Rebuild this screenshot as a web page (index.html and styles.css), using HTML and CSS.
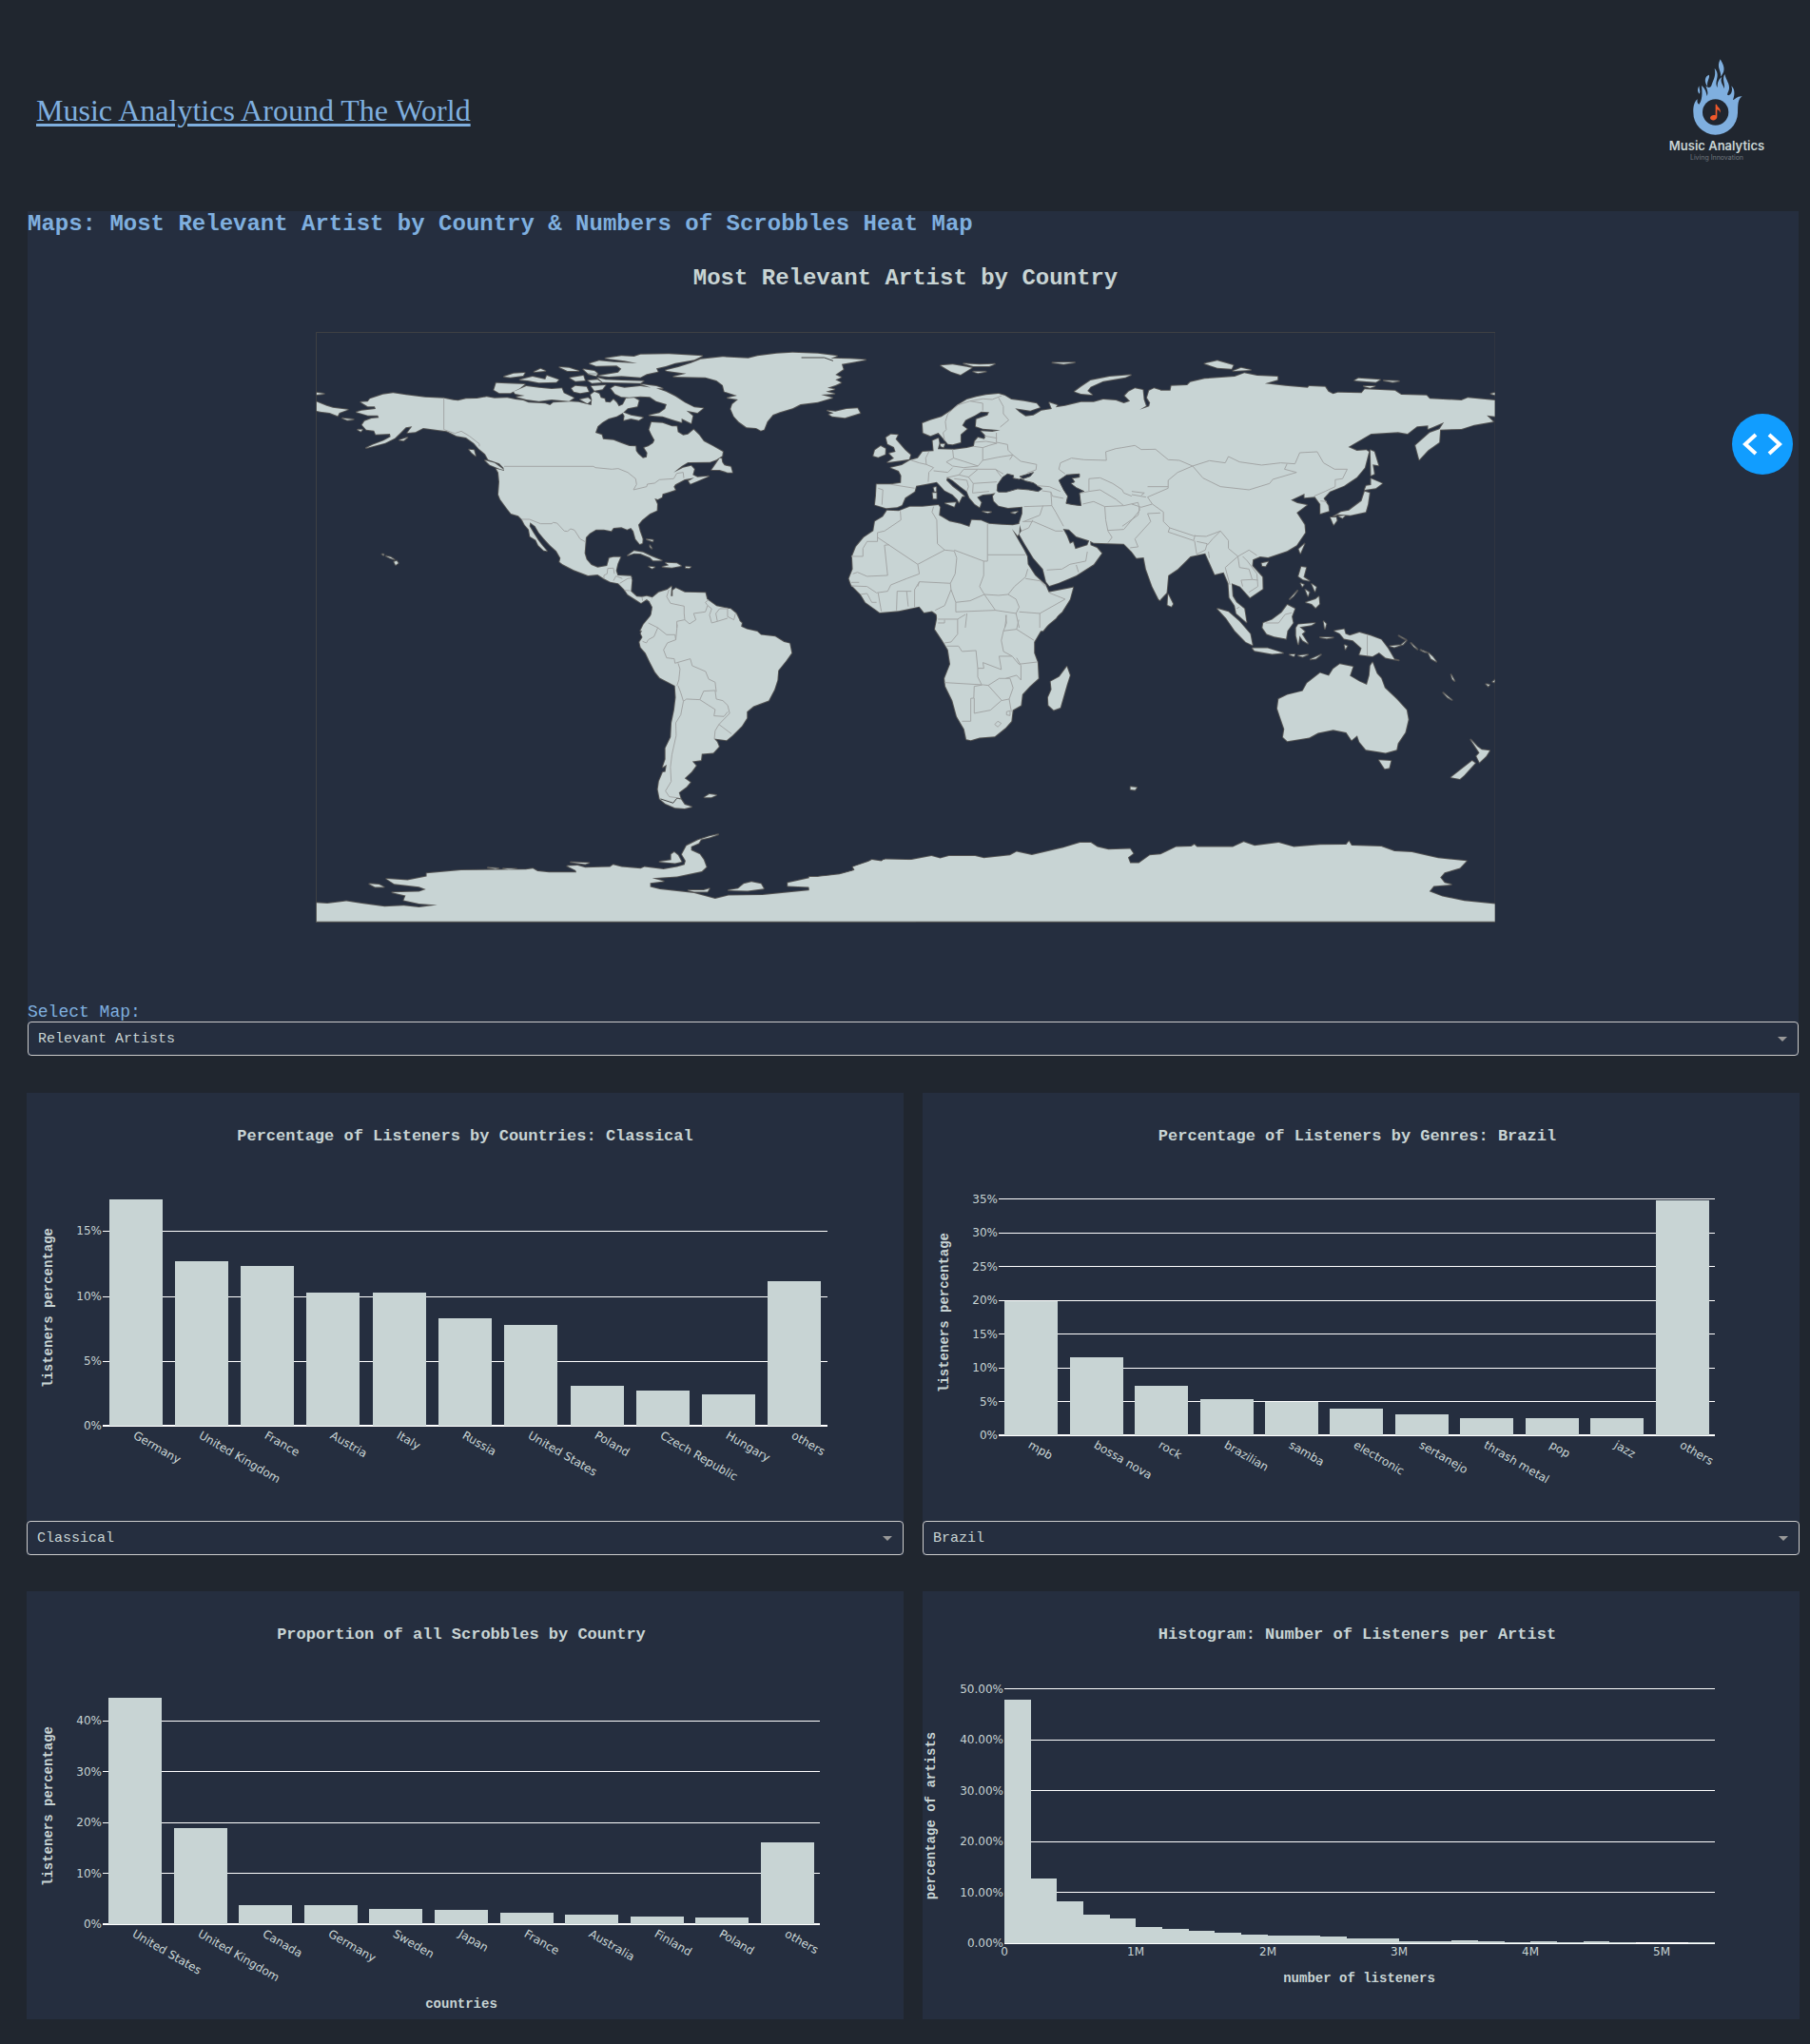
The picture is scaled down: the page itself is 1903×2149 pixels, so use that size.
FILE: index.html
```html
<!DOCTYPE html>
<html lang="en">
<head>
<meta charset="utf-8">
<title>Music Analytics Around The World</title>
<meta name="viewport" content="width=device-width, initial-scale=1">
<link rel="stylesheet" href="styles.css">
</head>
<body>
<header class="header">
  <h1 class="header-title">Music Analytics Around The World</h1>
  <div class="logo">
    <svg class="logo-mark" viewBox="236 92 160 240" aria-hidden="true">
      <path class="flame" d="M243 260C242 240 248 224 256 219C254 228 257 234 261 235C271 223 272 200 269 176C281 186 284 198 286 209C291 200 287 190 282 177C290 184 297 183 300 176C304 160 316 148 310 121C323 135 319 150 316 161C314 172 316 178 319 182C318 166 324 154 333 149C326 165 337 173 341 186C343 168 333 155 342 140C347 160 358 170 356 185C355 195 349 200 351 206C361 209 369 194 363 177C375 188 374 205 368 221C375 222 378 209 397 210C383 219 384 235 383 262A70 70 0 0 1 243 260ZM328 93C338 110 348 128 329 148C333 130 314 120 328 93ZM293 142C278 146 277 165 288 179C284 164 295 154 293 142ZM261 177C255 188 256 196 262 202C266 195 262 188 261 177Z"/>
      <circle class="disc" cx="313" cy="260" r="41"/>
      <path class="note" d="M313 235H317C319 247 331 245 328 262C326 254 321 252 318 252V276C317 287 297 289 296 278C297 269 307 267 313 270Z"/>
    </svg>
    <strong class="logo-name">Music Analytics</strong>
    <span class="logo-tag">Living Innovation</span>
  </div>
</header>

<main class="page">
  <section class="panel map-panel">
    <h2 class="section-title">Maps: Most Relevant Artist by Country &amp; Numbers of Scrobbles Heat Map</h2>
    <div class="map-area">
    <h3 class="map-title">Most Relevant Artist by Country</h3>
    <svg class="map" viewBox="36 27 3722 1862" role="img" aria-label="World map">
      <defs>
        <g id="land">
          <!-- North America and Greenland -->
          <path d="M178 248L200 247L207 238L230 230L248 224L280 220L320 226L380 233L440 236L470 242L485 244L510 238L545 237L575 232L600 236L640 235L665 240L690 243L707 250L760 253L775 258L785 250L840 247L865 248L905 258L907 240L903 225L915 216L930 222L935 235L947 238L950 248L965 250L975 240L985 250L992 262L1005 256L1015 236L1040 235L1055 243L1050 262L1020 268L1005 282L985 293L960 300L940 312L925 325L918 345L938 352L942 365L975 368L1000 378L1025 387L1045 388L1046 402L1053 412L1068 425L1080 422L1082 408L1072 392L1085 388L1100 378L1105 368L1095 350L1088 335L1095 312L1130 314L1160 325L1175 325L1178 343L1195 353L1210 350L1228 335L1245 352L1260 372L1290 388L1320 405L1318 418L1300 430L1280 437L1210 438L1190 450L1165 470L1195 455L1220 449L1230 460L1225 478L1240 485L1275 482L1240 497L1218 506L1212 497L1230 487L1200 492L1170 508L1165 515L1170 525L1150 532L1130 538L1128 548L1115 555L1105 552L1113 570L1112 590L1090 600L1065 620L1053 635L1058 655L1067 680L1066 693L1058 696L1045 680L1038 655L1030 645L1018 650L1000 643L975 645L968 655L945 650L920 650L900 662L888 675L886 700L884 725L890 745L905 762L925 770L955 765L962 740L975 737L997 737L988 758L983 780L988 795L1030 797L1033 810L1030 845L1048 862L1065 863L1080 860L1098 865L1092 880L1080 870L1062 882L1040 868L1020 855L1010 840L990 820L965 815L945 805L925 792L895 795L850 778L815 760L805 752L808 740L795 718L775 700L755 678L740 660L728 640L712 628L710 640L722 660L738 685L752 703L765 718L755 716L738 700L730 683L712 672L708 650L695 635L686 618L675 607L652 600L640 585L618 555L612 540L615 500L612 470L605 458L630 465L628 455L615 442L580 430L570 412L550 395L535 378L510 360L480 355L450 340L420 336L375 330L350 343L325 345L340 325L320 328L303 345L285 362L255 377L195 393L215 383L250 370L272 358L270 348L225 350L220 338L195 335L182 320L190 308L212 300L235 298L232 290L200 290L165 280L180 275L225 270L222 262L200 262Z"/>
          <path d="M570 432L600 440L630 462L618 460L585 446ZM1310 425L1300 440L1285 462L1310 462L1335 470L1350 470L1345 452L1325 448L1318 438L1316 426ZM605 188L640 190L695 192L680 205L650 220L615 220L598 210ZM660 215L700 198L740 203L780 207L812 205L818 220L850 235L835 245L780 240L740 245L700 240L670 232L695 228L665 222ZM843 205L855 197L890 200L897 215L870 220L850 215ZM905 198L950 195L940 208L915 212ZM870 240L895 235L905 243L893 253Z"/>
          <path d="M967 205L980 197L1010 203L1060 198L1110 205L1140 215L1170 230L1200 250L1230 265L1258 268L1240 282L1205 275L1225 292L1220 315L1190 300L1190 312L1160 303L1130 293L1088 290L1120 283L1138 270L1143 255L1110 245L1090 232L1060 230L1025 233L1000 232L980 222ZM1003 280L1030 290L1068 297L1055 305L1030 300L1008 305L1010 292ZM925 172L950 178L1000 180L1070 182L1060 188L1000 187L940 185ZM1062 192L1110 198L1130 205L1100 205Z"/>
          <path d="M950 110L1000 103L1040 105L1060 98L1150 97L1255 103L1230 115L1170 125L1140 135L1110 142L1115 152L1080 160L1060 170L1000 166L960 168L930 165L990 155L1000 143L985 133L920 134L900 127L930 118L975 122L1050 126L1010 118ZM680 178L720 168L760 177L765 165L802 178L795 185L740 187L705 180ZM630 168L660 158L695 156L690 165L650 170ZM725 153L745 143L760 150ZM805 138L835 140L865 150L830 150ZM838 172L880 165L885 180L855 182ZM880 145L915 150L925 158L895 158ZM895 180L925 178L937 186L907 188ZM895 160L925 160L920 166Z"/>
          <path d="M37 218L62 222L37 225ZM37 247L70 260L90 266L137 272L110 282L105 292L80 282L50 278L37 275ZM120 299L155 303L135 305ZM168 335L183 335L178 341ZM300 368L325 360L313 370ZM520 398L535 400L540 418L528 408ZM283 752L291 749L296 756L288 762ZM258 734L272 737L284 745L270 740ZM245 728L250 728L250 731ZM1020 732L1040 718L1068 722L1095 735L1127 748L1100 748L1090 738L1060 726L1040 725ZM1140 755L1175 757L1188 765L1160 770L1130 768L1150 763ZM1087 767L1105 769L1097 773ZM1203 767L1219 768L1214 772L1203 771ZM1080 681L1100 683L1099 688ZM1090 700L1096 710L1091 706Z"/>
          <path d="M1140 148L1180 138L1220 125L1250 113L1320 106L1400 110L1430 103L1490 95L1540 92L1620 95L1680 103L1660 110L1720 112L1770 115L1730 122L1695 128L1700 145L1675 162L1693 170L1675 178L1693 187L1675 195L1650 203L1672 208L1645 215L1672 222L1630 225L1665 235L1620 248L1565 255L1540 268L1500 280L1478 288L1460 310L1450 335L1440 338L1425 330L1395 328L1370 310L1355 293L1345 270L1350 255L1368 240L1335 235L1365 228L1325 215L1320 195L1300 180L1265 170L1165 168L1205 158L1145 150Z"/>
          <!-- South America -->
          <path d="M1098 865L1118 848L1145 840L1158 830L1156 860L1162 860L1162 842L1172 835L1200 848L1265 850L1270 870L1300 892L1340 900L1360 915L1368 935L1380 945L1375 970L1060 970L1070 950L1095 920L1098 895L1090 880Z"/>
          <g transform="matrix(1.2054 0 0 1 0 900)">
            <path d="M912 0L905 30L888 60L880 78L885 90L877 105L880 122L893 140L905 170L918 200L930 218L970 243L972 280L968 320L961 360L959 405L945 440L945 475L938 500L948 492L945 515L938 516L928 545L925 570L930 600L945 615L970 628L995 630L1013 625L995 618L985 600L980 580L1000 562L1010 548L995 535L1013 515L1025 495L1015 482L1038 478L1040 458L1070 455L1085 435L1080 420L1072 410L1105 415L1120 400L1145 370L1158 345L1158 325L1175 308L1215 290L1230 255L1238 225L1240 195L1260 165L1275 140L1270 110L1255 105L1232 88L1195 83L1185 72L1158 65L1140 55L1138 35L1130 15L1115 0ZM1047 595L1060 585L1078 588L1065 595Z"/>
            <path d="M30 928L60 930L110 923L150 930L210 940L260 937L300 942L348 935L300 930L260 920L265 905L230 895L300 893L318 885L300 877L235 868L215 852L270 857L320 845L320 835L410 825L580 823L598 820L610 828L640 832L712 832L710 825L688 812L715 810L735 817L800 815L808 808L830 815L880 820L890 815L940 822L975 815L995 808L998 795L988 775L1000 748L1030 730L1060 718L1083 712L1060 722L1038 728L1032 740L1012 750L1012 762L1035 775L1045 792L1052 815L1040 828L975 845L910 850L940 860L905 865L905 878L930 885L1020 897L1075 915L1110 905L1200 903L1325 888L1320 878L1265 875L1265 865L1330 848L1400 840L1440 825L1437 815L1475 800L1485 792L1510 797L1520 791L1600 793L1600 988L30 988Z"/>
            <path d="M930 798L960 793L960 775L968 768L978 778L987 798L970 803ZM1110 888L1135 883L1150 868L1170 862L1195 868L1202 883L1160 890ZM170 868L195 870L208 878L185 878ZM697 800L745 802L735 806ZM1005 888L1045 888L1060 883L1055 893L1020 893ZM480 817L508 819L500 821ZM520 820L555 821L535 823Z"/>
          </g>
          <!-- Europe, western Asia and northern Africa -->
          <g transform="translate(1500 0)">
            <path d="M1200 211L1180 205L1165 212L1158 235L1168 250L1165 262L1135 272L1155 260L1148 240L1145 210L1120 205L1100 215L1088 228L1105 245L1085 252L1060 243L1020 240L990 248L950 248L900 260L870 265L875 258L850 250L858 270L825 275L800 290L775 293L755 280L742 268L790 275L820 265L810 253L770 245L730 240L710 228L690 222L650 226L620 232L590 240L565 255L540 275L510 295L475 305L450 315L452 345L475 355L500 345L515 362L530 380L545 382L570 375L570 350L590 333L575 322L585 305L615 290L635 278L660 280L655 290L620 302L618 325L640 332L695 337L670 342L635 340L650 355L645 365L625 360L615 372L612 388L590 393L550 398L498 397L503 378L500 362L482 370L485 403L450 405L435 425L410 432L385 447L350 455L375 465L383 480L382 503L350 508L305 508L303 545L300 572L335 583L370 580L385 573L395 550L425 530L430 512L455 508L495 500L520 527L545 540L560 555L565 565L575 545L582 545L565 530L545 515L525 495L528 485L545 495L570 515L590 530L598 550L615 570L630 580L635 565L622 548L640 540L665 538L680 535L672 545L675 560L690 575L720 582L765 578L765 600L755 630L762 655L755 665L775 700L800 740L830 775L840 815L850 828L880 818L935 795L990 760L1015 725L1000 708L980 700L978 680L970 700L932 712L925 690L915 695L905 670L893 648L912 650L935 672L975 685L990 692L1085 695L1110 720L1125 740L1148 738L1155 775L1175 830L1195 870L1200 872Z"/>
            <path d="M335 360L350 350L372 352L365 365L378 380L395 400L412 415L408 428L380 433L340 438L360 425L345 410L365 405L360 390L340 380ZM295 418L300 400L318 387L333 395L332 413L310 422ZM150 275L175 278L210 270L245 268L253 283L205 298L165 293L155 287L170 283ZM508 133L545 130L605 140L570 162L540 152ZM580 127L630 130L678 128L660 135L610 135ZM610 152L650 152L625 157ZM860 124L930 123L895 128ZM930 215L950 200L980 180L1040 168L1107 163L1090 170L1020 182L980 200L970 213L985 225L950 222ZM482 535L494 535L494 553L484 553ZM485 518L493 516L493 530L488 530ZM522 567L555 565L550 578ZM640 593L666 595L656 598ZM730 597L750 593L742 599ZM506 380L520 380L516 391L508 388Z"/>
            <path d="M338 590L375 592L410 578L450 578L500 573L505 580L502 605L535 625L570 632L598 642L605 620L635 622L660 632L700 635L735 637L757 632L755 662L750 670L732 648L750 680L770 715L780 735L782 760L805 795L838 825L848 848L925 833L915 870L890 910L850 945L830 970L495 970L497 920L480 908L455 912L440 893L375 907L315 912L270 880L255 855L225 825L218 805L230 775L228 735L240 705L265 675L295 655L300 625L325 610Z"/>
          </g>
          <!-- Eastern Asia -->
          <g transform="translate(2580 0)">
            <path d="M110 855L118 873L140 850L145 795L175 775L215 735L262 725L280 765L292 792L320 785L335 820L338 865L355 890L360 915L392 943L385 900L360 880L348 860L345 820L372 830L403 865L443 838L442 800L410 765L412 745L435 735L460 738L520 718L550 700L577 660L575 635L550 597L582 573L552 567L532 557L575 537L575 550L608 547L625 570L625 600L652 592L650 575L635 552L655 530L700 512L740 485L765 455L778 405L770 400L740 402L713 390L785 348L870 343L900 348L930 325L965 322L965 333L1015 312L1000 335L1070 333L1110 320L1170 310L1150 290L1176 293L1176 243L1090 235L1070 243L970 238L960 227L880 225L860 212L765 208L755 220L680 218L665 223L650 215L640 200L590 198L585 203L515 197L450 190L490 178L490 168L425 165L385 157L355 168L260 175L215 185L205 195L155 197L152 212L110 212Z"/>
            <path d="M1003 333L1000 375L965 400L937 430L925 385L970 345ZM783 400L795 405L808 448L790 445L795 475L785 480ZM785 490L820 505L800 520L765 525L770 512L785 510ZM765 530L780 535L775 570L768 595L720 605L680 602L665 610L690 595L715 590L735 575L755 560ZM657 612L675 612L677 622L667 635ZM683 608L703 606L695 614ZM575 695L562 725L557 712ZM440 757L460 752L452 766L442 765ZM145 855L160 885L155 893L143 888ZM260 127L300 118L350 132L345 143L300 140ZM350 150L375 140L405 147ZM733 180L745 173L813 178L800 185ZM825 180L873 182L853 185ZM762 198L797 198L782 203ZM1163 222L1176 219L1176 226ZM565 768L580 770L572 800L590 812L570 808L556 798ZM580 880L610 870L620 862L622 885L610 897L598 885ZM578 840L590 848L586 860ZM598 822L612 832L608 845ZM563 820L573 824L568 830ZM528 870L553 843L540 860Z"/>
          </g>
          <!-- Southern Africa, Indonesia, Australia and eastern Antarctica -->
          <g transform="matrix(1.3776 0 0 1 1620 600)">
            <path d="M270 300L273 330L268 365L285 400L298 430L303 475L290 520L292 545L308 590L318 640L335 680L340 712L350 715L370 707L405 703L430 675L443 655L446 620L465 605L468 570L485 545L505 520L503 470L495 440L495 405L510 370L545 330L560 300ZM570 483L577 510L570 540L555 612L540 620L528 605L527 580L535 555L533 530L553 515Z"/>
            <path d="M915 300L940 310L965 340L990 380L995 415L980 405L955 370L935 330ZM995 425L1030 425L1065 440L1040 443L1000 433ZM1020 345L1040 335L1062 312L1075 288L1092 300L1085 325L1088 345L1075 370L1072 395L1045 388L1028 380L1018 360ZM1095 360L1100 350L1138 345L1130 352L1103 358L1115 372L1108 380L1122 410L1110 400L1103 385L1100 412L1095 385ZM1158 340L1164 348L1161 363ZM1080 445L1092 444L1090 450ZM1100 448L1122 445L1110 452ZM1128 460L1152 445L1140 458ZM1150 390L1180 391L1165 394ZM1183 370L1205 365L1208 380L1218 385L1240 375L1265 385L1290 398L1305 425L1320 460L1330 463L1300 455L1285 438L1270 450L1240 445L1245 425L1225 400L1205 395L1195 378ZM1310 418L1335 415L1348 400L1340 413L1320 422ZM1330 385L1347 398L1338 392ZM1206 415L1212 418L1208 428Z"/>
            <path d="M1358 408L1373 428L1365 420ZM1380 430L1395 438L1388 436ZM1398 440L1408 452L1416 467L1404 458ZM1450 508L1458 528L1453 522ZM1432 565L1452 588L1442 580ZM1530 538L1538 540L1535 545ZM1545 531L1551 524L1549 532ZM716 862L730 864L726 872L716 870Z"/>
            <path d="M1270 470L1280 505L1290 520L1298 550L1325 585L1348 620L1352 650L1345 690L1328 725L1325 745L1300 755L1280 750L1255 745L1240 720L1235 700L1222 715L1210 690L1180 682L1145 692L1125 707L1075 718L1065 705L1068 680L1058 640L1052 615L1055 585L1075 572L1110 560L1120 535L1150 503L1170 512L1180 490L1195 475L1225 483L1218 512L1240 530L1257 540L1263 510L1265 480ZM1285 778L1312 780L1308 803L1298 805ZM1495 713L1510 735L1520 745L1538 748L1530 765L1515 785L1508 765L1515 755ZM1498 780L1505 787L1480 825L1470 837L1450 832L1475 805Z"/>
            <path d="M-20 1146L0 1146L50 1138L85 1125L80 1115L120 1096L145 1098L150 1092L160 1096L200 1096L260 1080L280 1088L300 1080L360 1080L380 1087L440 1078L455 1067L490 1077L560 1055L600 1038L625 1038L640 1052L665 1060L715 1058L722 1072L710 1085L715 1103L735 1103L760 1078L785 1075L820 1052L855 1050L862 1044L868 1052L950 1052L975 1036L1000 1048L1055 1038L1090 1052L1150 1045L1210 1044L1216 1034L1222 1047L1290 1050L1320 1065L1360 1068L1420 1087L1485 1096L1470 1118L1435 1132L1425 1148L1435 1165L1450 1170L1410 1175L1400 1192L1430 1208L1480 1222L1551 1232L1551 1288L-20 1288Z"/>
          </g>
        </g>
      </defs>
      <use class="coast" href="#land"/>
      <use class="ground" href="#land"/>
      <g class="sea">
        <path transform="translate(1500 0)" d="M685 528L687 508L703 485L718 475L738 480L735 488L755 492L760 490L775 497L800 503L827 522L815 530L785 525L750 522L715 532L690 532ZM757 483L800 470L790 482L768 490ZM880 495L905 478L945 475L945 485L922 488L930 500L918 505L935 518L960 530L945 535L950 575L925 572L903 568L908 545L895 525Z"/>
      </g>
      <g class="inlet">
        <path d="M1568 108L1640 108L1668 118"/>
        <path transform="matrix(1.2054 0 0 1 0 900)" d="M932 600L965 613L975 598L985 600"/>
      </g>
      <g class="border">
        <path d="M440 236V335L475 347L495 340L520 355L552 380L552 388M630 451H912L918 455L970 460L990 458L1020 470L1045 490L1048 508L1038 525L1080 515L1082 507L1105 504L1120 493L1165 490L1175 473L1195 470L1197 488M686 618L710 618L745 632L780 632L785 628L797 630L820 655L830 656L840 648L852 652L870 680L888 690M945 805L945 795L955 790L957 773L975 772L978 790M975 812L983 797L1003 805M995 820L1020 805L1033 803M1010 842L1028 843M1065 863L1067 875M1150 840L1143 862L1155 883L1198 892L1198 915L1200 935L1215 948L1235 935L1228 915L1265 910L1272 890L1265 880L1275 872M1272 890L1285 900L1278 920L1285 945L1303 940L1298 915L1310 900L1335 900L1335 925L1355 935L1360 915M1303 940L1335 930M1175 960V940L1200 935"/>
        <path transform="matrix(1.2054 0 0 1 0 900)" d="M900 45L925 60L948 82L970 82L972 98L950 108L940 130L948 155L968 158L970 172L1010 158L1015 180L1050 198L1058 222L1075 232L1078 262M925 60L915 88L900 98L895 108L885 103M978 172L983 190L980 225L975 243M972 98L976 50M978 243L985 265L992 292L1000 285L1035 287L1045 260L1075 258L1078 285L1095 290L1108 305L1113 330L1085 365L1118 395M1035 287L1075 318L1072 338L1098 340L1108 325M1085 365L1075 385L1073 410M992 292L985 335L972 360L973 400L962 460L958 500L960 545L945 575L955 593L980 597"/>
        <path transform="translate(1500 0)" d="M520 370L515 345L525 335L522 310L530 285L560 258L600 245L640 252L640 275M600 245L640 238L670 240L700 228M690 235L705 262L705 285L722 305L695 327M645 355L685 362M683 345V375L718 382L720 400L735 415L725 430M615 375L650 372L685 378M612 388L640 392L640 432L690 422L735 415L760 435L810 445L808 462L780 472M640 392L660 385L685 378M545 398L548 425L580 435L625 450L640 432M548 425L525 437L545 450L580 455L625 450M470 405L460 425L462 445L485 455L470 470L468 500M415 432L440 440L462 445M485 465L530 470L545 455M525 487L565 478L580 460M580 460L625 460L680 460L700 485M680 460L705 475M625 460L595 485L610 505L685 500M565 478L595 485M550 490L590 495L595 515L590 530M610 505L608 535L660 530M310 520L325 525L322 572M350 508L425 520"/>
        <path transform="translate(1500 0)" d="M812 512L850 515L885 530M827 528L855 532L860 545L895 552M855 532L858 575L770 578M858 575L870 595L895 640M830 575L820 605L770 625M765 625L800 625L870 655L893 655M762 655L785 645L798 620M842 778L890 775L915 760L965 750L970 720M935 762L942 785M955 570L990 562L1025 578L1028 620L1035 655L1048 675L1035 692M1035 653L1085 650L1110 620L1135 590L1130 565L1085 575L1025 578M950 535L975 530L1010 525L1060 555L1085 575M975 530V490L1010 487L1050 505L1080 525L1085 535L1110 545M900 475L880 460L885 440L920 425L960 430L1030 432L1028 405L1060 395L1080 392"/>
        <path transform="translate(1500 0)" d="M380 592L382 620L330 655L308 660L308 688H275L262 710L262 735H225M308 675L435 760L520 715L497 695L495 620L480 595L485 578M655 632V750H643L550 715M655 730H775M520 715L550 718L558 740L553 790L538 820L440 815L435 830M435 760L440 790L400 805L350 825L340 845L305 850L275 830L225 828M330 700L340 795L275 798L245 785L230 790M330 700L345 698M643 750V795L630 830L645 855L690 858L720 855L740 830L775 800L782 775M775 805L820 812L838 830M645 855L680 905L745 915L755 895L745 870L720 855M645 855L600 875L555 880L555 910L680 905M555 880L540 840L538 820M540 840L520 890L490 905M755 910L820 915L900 870L850 850M820 915V960M310 850L320 908M370 845L368 905M400 845L405 893M370 845H415M425 895L425 840L440 815M255 855L275 852L290 880L305 880M225 817H250M585 960L590 915M745 915L755 960M710 960L715 920"/>
        <path transform="matrix(1.3776 0 0 1 1620 600)" d="M275 333H320L338 318M275 345H290V335M320 333L320 380L305 405L290 408M295 418L322 418L330 435L362 432L366 488L366 515L375 540L290 533M366 488H380L378 470L420 492L415 450L445 450L425 435L420 400L425 370L455 365L460 335M455 365L495 400M445 450L460 475L503 468M378 540L358 545L357 582L350 583V655L330 655M358 582V630L395 620L420 590L438 585L447 550L440 520L415 520L390 542L378 540M390 542L420 588M405 665L412 655L420 662L412 673ZM432 625L440 622L440 637L432 635ZM438 585L443 625M455 455L465 480L465 525L455 510L430 520M430 320L432 345L425 370M1025 345L1055 345L1070 318L1085 313M1258 385V447"/>
        <path transform="translate(2580 0)" d="M0 392L40 385L60 398L105 397L145 430L180 432L222 450L275 433L325 440L335 420L370 437L440 447L500 440L545 443L560 408L615 405L635 440L670 460L710 460L695 490L672 493L672 515L640 530L605 545M222 450L255 488L310 515L400 525L465 505L475 492L550 470L512 460L520 443M222 450L175 470L145 495L145 520L80 548L95 570L130 595L130 625L150 645L225 670L265 672L310 655L335 685L335 710L365 735L400 715L425 732M150 645L145 658L225 685L230 668M228 685L235 728L262 715L268 695L235 688M268 700L285 680L310 655M275 740L272 720M365 735L325 770L340 825M365 735L370 770L400 775L410 808L428 810M375 810L410 808M380 735L395 750L425 790L428 830L400 848M375 810L380 830M30 570L60 580L95 570M0 640L50 605L55 580M80 600L120 598M80 600L90 625L40 680L50 705L25 708M30 540L75 548M80 515L145 515M30 530L70 535L60 542M625 560L645 562M360 900L370 895"/>
      </g>
      <rect class="frame" x="37" y="28" width="3720" height="1860"/>
    </svg>
    </div>
    <label class="select-label" for="map-select">Select Map:</label>
    <div class="dropdown">
      <select id="map-select"><option>Relevant Artists</option><option>Scrobbles Heat Map</option></select>
    </div>
  </section>

  <div class="chart-grid">
    <section class="panel">
      <svg class="chart" viewBox="0 0 922 450" role="img" aria-label="Percentage of Listeners by Countries: Classical">
        <text class="chart-title" x="461" y="50">Percentage of Listeners by Countries: Classical</text>
        <path class="grid" d="M80 145H842M80 214H842M80 282H842"/>
        <path class="zero" d="M80 350H842"/>
        <g class="bars">
          <rect x="87" y="112" width="56" height="238"/><rect x="156" y="177" width="56" height="173"/><rect x="225" y="182" width="56" height="168"/><rect x="294" y="210" width="56" height="140"/><rect x="364" y="210" width="56" height="140"/><rect x="433" y="237" width="56" height="113"/><rect x="502" y="244" width="56" height="106"/><rect x="572" y="308" width="56" height="42"/><rect x="641" y="313" width="56" height="37"/><rect x="710" y="317" width="56" height="33"/><rect x="779" y="198" width="56" height="152"/>
        </g>
        <g class="y-ticks"><text x="79" y="149">15%</text><text x="79" y="218">10%</text><text x="79" y="286">5%</text><text x="79" y="354">0%</text></g>
        <g class="x-names">
          <text transform="translate(115 360) rotate(30)" x="-2" y="4">Germany</text><text transform="translate(184 360) rotate(30)" x="-2" y="4">United Kingdom</text><text transform="translate(253 360) rotate(30)" x="-2" y="4">France</text><text transform="translate(322 360) rotate(30)" x="-2" y="4">Austria</text><text transform="translate(392 360) rotate(30)" x="-2" y="4">Italy</text><text transform="translate(461 360) rotate(30)" x="-2" y="4">Russia</text><text transform="translate(530 360) rotate(30)" x="-2" y="4">United States</text><text transform="translate(600 360) rotate(30)" x="-2" y="4">Poland</text><text transform="translate(669 360) rotate(30)" x="-2" y="4">Czech Republic</text><text transform="translate(738 360) rotate(30)" x="-2" y="4">Hungary</text><text transform="translate(807 360) rotate(30)" x="-2" y="4">others</text>
        </g>
        <text class="axis-title" transform="translate(27 226) rotate(-90)">listeners percentage</text>
      </svg>
      <div class="dropdown"><select aria-label="Genre"><option>Classical</option></select></div>
    </section>

    <section class="panel">
      <svg class="chart" viewBox="0 0 922 450" role="img" aria-label="Percentage of Listeners by Genres: Brazil">
        <text class="chart-title" x="457" y="50">Percentage of Listeners by Genres: Brazil</text>
        <path class="grid" d="M80 111H833M80 147H833M80 182H833M80 218H833M80 253H833M80 289H833M80 324H833"/>
        <path class="zero" d="M80 360H833"/>
        <g class="bars">
          <rect x="86" y="219" width="56" height="141"/><rect x="155" y="278" width="56" height="82"/><rect x="223" y="308" width="56" height="52"/><rect x="292" y="322" width="56" height="38"/><rect x="360" y="325" width="56" height="35"/><rect x="428" y="332" width="56" height="28"/><rect x="497" y="338" width="56" height="22"/><rect x="565" y="342" width="56" height="18"/><rect x="634" y="342" width="56" height="18"/><rect x="702" y="342" width="56" height="18"/><rect x="771" y="113" width="56" height="247"/>
        </g>
        <g class="y-ticks"><text x="79" y="116">35%</text><text x="79" y="151">30%</text><text x="79" y="187">25%</text><text x="79" y="222">20%</text><text x="79" y="258">15%</text><text x="79" y="293">10%</text><text x="79" y="329">5%</text><text x="79" y="364">0%</text></g>
        <g class="x-names">
          <text transform="translate(114 370) rotate(30)" x="-2" y="4">mpb</text><text transform="translate(183 370) rotate(30)" x="-2" y="4">bossa nova</text><text transform="translate(251 370) rotate(30)" x="-2" y="4">rock</text><text transform="translate(320 370) rotate(30)" x="-2" y="4">brazilian</text><text transform="translate(388 370) rotate(30)" x="-2" y="4">samba</text><text transform="translate(456 370) rotate(30)" x="-2" y="4">electronic</text><text transform="translate(525 370) rotate(30)" x="-2" y="4">sertanejo</text><text transform="translate(593 370) rotate(30)" x="-2" y="4">thrash metal</text><text transform="translate(662 370) rotate(30)" x="-2" y="4">pop</text><text transform="translate(730 370) rotate(30)" x="-2" y="4">jazz</text><text transform="translate(799 370) rotate(30)" x="-2" y="4">others</text>
        </g>
        <text class="axis-title" transform="translate(27 231) rotate(-90)">listeners percentage</text>
      </svg>
      <div class="dropdown"><select aria-label="Country"><option>Brazil</option></select></div>
    </section>

    <section class="panel">
      <svg class="chart" viewBox="0 0 922 450" role="img" aria-label="Proportion of all Scrobbles by Country">
        <text class="chart-title" x="457" y="50">Proportion of all Scrobbles by Country</text>
        <path class="grid" d="M80 136H834M80 189H834M80 243H834M80 296H834"/>
        <path class="zero" d="M80 350H834"/>
        <g class="bars">
          <rect x="86" y="112" width="56" height="238"/><rect x="155" y="249" width="56" height="101"/><rect x="223" y="330" width="56" height="20"/><rect x="292" y="330" width="56" height="20"/><rect x="360" y="334" width="56" height="16"/><rect x="429" y="335" width="56" height="15"/><rect x="498" y="338" width="56" height="12"/><rect x="566" y="340" width="56" height="10"/><rect x="635" y="342" width="56" height="8"/><rect x="703" y="343" width="56" height="7"/><rect x="772" y="264" width="56" height="86"/>
        </g>
        <g class="y-ticks"><text x="79" y="140">40%</text><text x="79" y="194">30%</text><text x="79" y="247">20%</text><text x="79" y="301">10%</text><text x="79" y="354">0%</text></g>
        <g class="x-names">
          <text transform="translate(114 360) rotate(30)" x="-2" y="4">United States</text><text transform="translate(183 360) rotate(30)" x="-2" y="4">United Kingdom</text><text transform="translate(251 360) rotate(30)" x="-2" y="4">Canada</text><text transform="translate(320 360) rotate(30)" x="-2" y="4">Germany</text><text transform="translate(388 360) rotate(30)" x="-2" y="4">Sweden</text><text transform="translate(457 360) rotate(30)" x="-2" y="4">Japan</text><text transform="translate(526 360) rotate(30)" x="-2" y="4">France</text><text transform="translate(594 360) rotate(30)" x="-2" y="4">Australia</text><text transform="translate(663 360) rotate(30)" x="-2" y="4">Finland</text><text transform="translate(731 360) rotate(30)" x="-2" y="4">Poland</text><text transform="translate(800 360) rotate(30)" x="-2" y="4">others</text>
        </g>
        <text class="axis-title" transform="translate(27 226) rotate(-90)">listeners percentage</text>
        <text class="axis-title" x="457" y="438">countries</text>
      </svg>
    </section>

    <section class="panel">
      <svg class="chart" viewBox="0 0 922 450" role="img" aria-label="Histogram: Number of Listeners per Artist">
        <text class="chart-title" x="457" y="50">Histogram: Number of Listeners per Artist</text>
        <path class="grid" d="M86 102H833M86 156H833M86 209H833M86 263H833M86 316H833"/>
        <path class="zero" d="M86 370H833"/>
        <path class="bars" d="M86 370V114H114V302H141V326H169V340H197V344H224V353H252V355H280V357H307V359H335V361H363V362H418V363H446V365H501V368H556V367H584V368H612V369H639V368H667V369H695V368H722V369H750V370ZM805 370V369H833V370Z"/>
        <g class="y-ticks"><text x="85" y="107">50.00%</text><text x="85" y="160">40.00%</text><text x="85" y="214">30.00%</text><text x="85" y="267">20.00%</text><text x="85" y="321">10.00%</text><text x="85" y="374">0.00%</text></g>
        <g class="x-ticks"><text x="86" y="383">0</text><text x="224" y="383">1M</text><text x="363" y="383">2M</text><text x="501" y="383">3M</text><text x="639" y="383">4M</text><text x="777" y="383">5M</text></g>
        <text class="axis-title" transform="translate(13 236) rotate(-90)">percentage of artists</text>
        <text class="axis-title" x="459" y="411">number of listeners</text>
      </svg>
    </section>
  </div>
</main>

<button class="debug-button" type="button" aria-label="Developer tools">
  <svg viewBox="0 0 64 64" aria-hidden="true"><path d="M25 22L14 32L25 42M39 22L50 32L39 42"/></svg>
</button>
</body>
</html>
```
FILE: styles.css
```css
* { box-sizing: border-box; }

body {
  margin: 0;
  background: #20262f;
  color: #c8d4d4;
  font-family: "Liberation Mono", monospace;
}

.header {
  display: flex;
  align-items: center;
  justify-content: space-between;
  min-height: 222px;
  padding: 10px 48px 0 38px;
}

.header-title {
  margin: 0;
  color: #7fafdf;
  font: 400 32px "Liberation Serif", serif;
  text-decoration: underline;
  text-decoration-thickness: 3px;
  text-underline-offset: 3px;
}

.logo {
  display: flex;
  flex-direction: column;
  align-items: center;
  width: 100px;
  font-family: Inter, sans-serif;
  white-space: nowrap;
}

.logo-mark { height: 80px; margin-bottom: 3px; }
.flame { fill: #7fafdf; }
.disc { fill: #20262f; }
.note { fill: #f0592b; }
.logo-name { font-size: 13px; line-height: 16px; font-weight: 600; }
.logo-tag { color: #72787f; font-size: 7px; line-height: 10px; }

.page {
  display: flex;
  flex-direction: column;
  gap: 39px;
  padding: 0 11px 26px 28px;
}

.panel { background: #252e3f; }

.map-panel {
  display: flex;
  flex-direction: column;
  margin: 0 1px;
}

.section-title,
.map-title {
  margin: 0;
  font-size: 24px;
  line-height: 28px;
}

.section-title { color: #7fafdf; }

.map-area { padding: 29px 16px 84px 0; }
.map-title { text-align: center; }

.map {
  display: block;
  width: 67.2%;
  margin: 42px auto 0;
}

.map path,
.map rect { vector-effect: non-scaling-stroke; }
.coast { fill: #c8d4d4; stroke: #545454; stroke-width: 2px; stroke-linejoin: round; }
.ground { fill: #c8d4d4; }
.sea { fill: #252e3f; stroke: #545454; stroke-width: 1px; }
.inlet { fill: none; stroke: #444; stroke-width: 1px; }
.border { fill: none; stroke: #a3a6a6; stroke-width: 1px; stroke-linejoin: round; }
.frame { fill: none; stroke: #444; stroke-width: 1px; }

.select-label {
  color: #7fafdf;
  font-size: 18px;
  line-height: 20px;
}

.dropdown { position: relative; }

.dropdown::after {
  content: "";
  position: absolute;
  top: 16px;
  right: 12px;
  border: 5px solid transparent;
  border-top-color: #999;
  border-bottom: 0;
  pointer-events: none;
}

.dropdown select {
  display: block;
  width: 100%;
  height: 36px;
  padding: 2px 10px 0;
  appearance: none;
  border: 1px solid #ccc;
  border-radius: 4px;
  background: #252e3f;
  color: #c8d4d4;
  font: 15px "Liberation Mono", monospace;
}

.chart-grid {
  display: grid;
  grid-template-columns: 1fr 1fr;
  gap: 38px 20px;
}

.chart {
  display: block;
  width: 100%;
  fill: #c8d4d4;
  font: 12px "DejaVu Sans", Verdana, sans-serif;
}

.chart-title { font: 700 17px "Liberation Mono", monospace; text-anchor: middle; }
.axis-title { font: 700 14px "Liberation Mono", monospace; text-anchor: middle; }
.y-ticks { text-anchor: end; }
.x-ticks { text-anchor: middle; }
.grid { stroke: #fff; stroke-width: 1px; shape-rendering: crispEdges; }
.zero { stroke: #fff; stroke-width: 2px; shape-rendering: crispEdges; }

.debug-button {
  position: fixed;
  top: 435px;
  right: 18px;
  width: 64px;
  height: 64px;
  padding: 0;
  border: 0;
  border-radius: 50%;
  background: #119dff;
}

.debug-button svg {
  display: block;
  fill: none;
  stroke: #fff;
  stroke-width: 4px;
}
```
